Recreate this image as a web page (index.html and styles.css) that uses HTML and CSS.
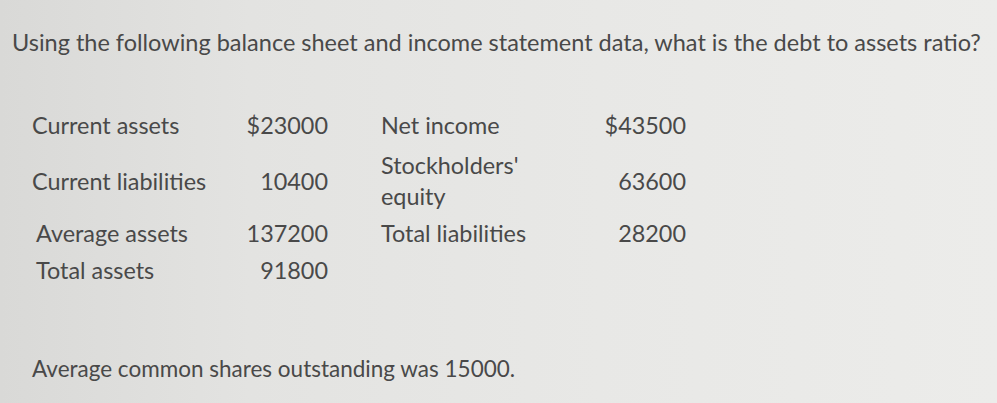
FILE: index.html
```html
<!DOCTYPE html>
<html lang="en">
<head>
<meta charset="utf-8">
<title>Debt to assets ratio</title>
<link rel="stylesheet" href="styles.css">
</head>
<body>
<main class="page">
  <p class="question">Using the following balance sheet and income statement data, what is the debt to assets ratio?</p>
  <div class="data">
    <div class="label">Current assets</div>
    <div class="value">$23000</div>
    <div class="label label-second">Net income</div>
    <div class="value">$43500</div>

    <div class="label">Current liabilities</div>
    <div class="value">10400</div>
    <div class="label label-second">Stockholders'<br>equity</div>
    <div class="value">63600</div>

    <div class="label label-shift">Average assets</div>
    <div class="value">137200</div>
    <div class="label label-second">Total liabilities</div>
    <div class="value">28200</div>

    <div class="label label-shift">Total assets</div>
    <div class="value">91800</div>
    <div class="label label-second"></div>
    <div class="value"></div>
  </div>
  <p class="note">Average common shares outstanding was 15000.</p>
</main>
</body>
</html>
```
FILE: styles.css
```css
html, body {
  margin: 0;
  height: 100%;
}
body {
  background: linear-gradient(90deg, #d9d9d7 0%, #e3e3e1 25%, #e8e8e6 60%, #ececea 100%);
  font-family: Lato, "Open Sans", sans-serif;
  color: #494949;
  overflow: hidden;
}
.page {
  padding: 26px 0 0 12px;
}
.question {
  margin: 0;
  font-size: 23.5px;
  line-height: 32px;
}
.data {
  display: grid;
  grid-template-columns: 200px 96px 203px 155px;
  grid-template-rows: 49px 62px 43px 31px;
  align-items: center;
  margin: 43px 0 0 20px;
  font-size: 23.4px;
  line-height: 31px;
}
.label-second {
  padding-left: 53px;
}
.label-shift {
  padding-left: 4px;
}
.value {
  text-align: right;
}
.note {
  margin: 67px 0 0 20px;
  font-size: 22.5px;
  line-height: 31px;
}
```
